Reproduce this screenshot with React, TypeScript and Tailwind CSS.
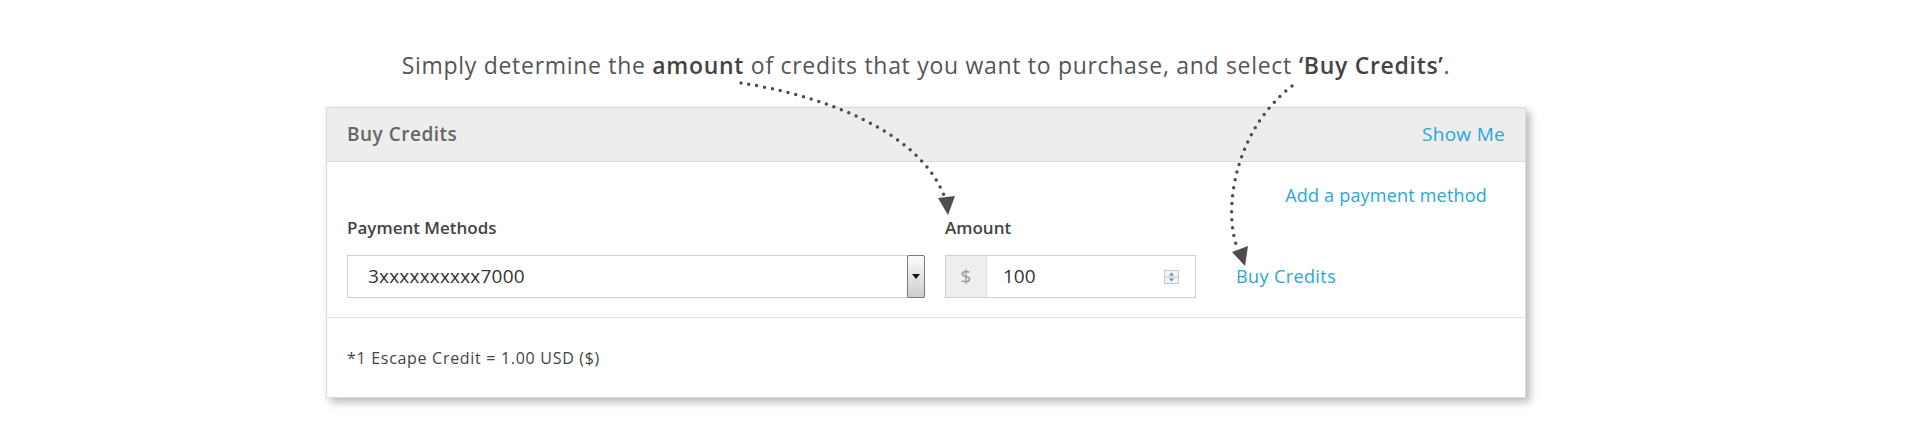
export default function App() {
  return (
    <div className="relative w-[1920px] h-[428px] bg-white overflow-hidden font-['Open_Sans',sans-serif]">
      <div className="w-[1200px] ml-[326px] pt-[50px]">
        <p className="text-center text-[23px] leading-[30px] tracking-[0.7px] text-[#555]">
          Simply determine the <span className="font-semibold text-[#444]">amount</span> of credits that you want to
          purchase, and select <span className="font-semibold text-[#444]">‘Buy Credits’</span>.
        </p>

        <div className="mt-[27px] border border-[#dcdcdc] bg-white shadow-[4px_4px_8px_rgba(0,0,0,0.28)]">
          {/* header */}
          <div className="flex items-center justify-between h-[54px] px-[20px] bg-[#ededed] border-b border-[#dcdcdc]">
            <span className="text-[19px] tracking-[0.5px] font-semibold text-[#666]">Buy Credits</span>
            <a className="text-[19px] tracking-[0.3px] text-[#2ba6d8] cursor-pointer">Show Me</a>
          </div>

          {/* body */}
          <div className="pl-[20px] pr-[38px] pt-[21px] pb-[19px] border-b border-[#e3e3e3]">
            <div className="flex justify-end h-[24px] items-center">
              <a className="text-[18px] tracking-[0.2px] text-[#2ba6d8] cursor-pointer">Add a payment method</a>
            </div>

            <div className="flex mt-[11px]">
              <div className="w-[578px]">
                <label className="block text-[17px] leading-[20px] font-semibold text-[#444]">Payment Methods</label>
                <div className="mt-[17px] flex h-[43px] border border-[#cfcfcf] bg-white">
                  <div className="flex-1 flex items-center pl-[20px] text-[19px] tracking-[0.2px] text-[#333]">
                    3xxxxxxxxxx7000
                  </div>
                  <div className="w-[18px] -my-px -mr-px flex items-center justify-center rounded-[2px] border border-[#7a7a7a] bg-gradient-to-b from-[#fbfbfb] to-[#cdcdcd]">
                    <svg width="8" height="5" viewBox="0 0 8 5">
                      <path d="M0 0h8L4 5z" fill="#111" />
                    </svg>
                  </div>
                </div>
              </div>

              <div className="w-[251px] ml-[20px]">
                <label className="block text-[17px] leading-[20px] font-semibold text-[#444]">Amount</label>
                <div className="mt-[17px] flex h-[43px] border border-[#cfcfcf] bg-white">
                  <div className="w-[41px] flex items-center justify-center bg-[#eeeeee] border-r border-[#dddddd] text-[19px] text-[#999]">
                    $
                  </div>
                  <div className="flex-1 flex items-center justify-between pl-[16px] pr-[16px] text-[19px] text-[#333]">
                    <span>100</span>
                    <svg width="15" height="14" viewBox="0 0 15 14">
                      <rect x="0.5" y="0.5" width="14" height="13" fill="#f4f4f4" stroke="#c8c8c8" />
                      <line x1="1" y1="7" x2="14" y2="7" stroke="#c8c8c8" />
                      <path d="M5 5.5h5L7.5 2.5z" fill="#5b8fc9" />
                      <path d="M5 8.5h5L7.5 11.5z" fill="#5b8fc9" />
                    </svg>
                  </div>
                </div>
              </div>

              <div className="w-[251px] ml-[40px] flex flex-col justify-end">
                <div className="h-[43px] flex items-center">
                  <a className="text-[18px] tracking-[0.4px] text-[#2ba6d8] cursor-pointer">Buy Credits</a>
                </div>
              </div>
            </div>
          </div>

          {/* footer */}
          <div className="h-[79px] flex items-center px-[20px] text-[16px] tracking-[0.7px] text-[#444]">
            *1 Escape Credit = 1.00 USD ($)
          </div>
        </div>
      </div>

      {/* dotted callout arrows */}
      <svg className="absolute inset-0 pointer-events-none" width="1920" height="428" viewBox="0 0 1920 428">
        <path
          d="M741 83 C 820 95, 920 130, 945 198"
          fill="none"
          stroke="#4d4d4d"
          strokeWidth="3.5"
          strokeLinecap="round"
          strokeDasharray="0 8"
        />
        <path d="M938 198 L955 196 L948 215 Z" fill="#4d4d4d" />
        <path
          d="M1292 86 C 1235 130, 1222 210, 1238 250"
          fill="none"
          stroke="#4d4d4d"
          strokeWidth="3.5"
          strokeLinecap="round"
          strokeDasharray="0 8"
        />
        <path d="M1232 252 L1248 246 L1245 266 Z" fill="#4d4d4d" />
      </svg>
    </div>
  );
}
